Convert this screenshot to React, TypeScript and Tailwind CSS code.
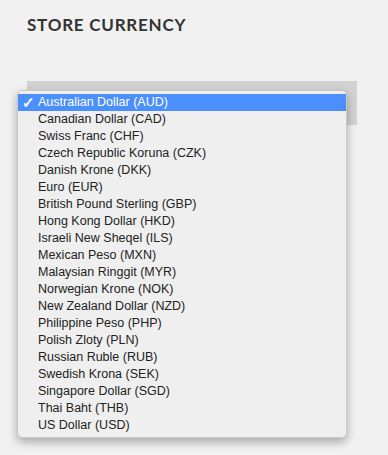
const currencies = [
  "Australian Dollar (AUD)",
  "Canadian Dollar (CAD)",
  "Swiss Franc (CHF)",
  "Czech Republic Koruna (CZK)",
  "Danish Krone (DKK)",
  "Euro (EUR)",
  "British Pound Sterling (GBP)",
  "Hong Kong Dollar (HKD)",
  "Israeli New Sheqel (ILS)",
  "Mexican Peso (MXN)",
  "Malaysian Ringgit (MYR)",
  "Norwegian Krone (NOK)",
  "New Zealand Dollar (NZD)",
  "Philippine Peso (PHP)",
  "Polish Zloty (PLN)",
  "Russian Ruble (RUB)",
  "Swedish Krona (SEK)",
  "Singapore Dollar (SGD)",
  "Thai Baht (THB)",
  "US Dollar (USD)",
];

export default function App() {
  const selected = 0;
  return (
    <div className="w-[388px] h-[455px] bg-[#f1f1f1] overflow-hidden font-['Liberation_Sans',Arial,sans-serif]">
      <div className="pl-[27px] pt-[15px]">
        <h2 className="font-['Lato','Open_Sans',sans-serif] font-bold text-[17px] leading-[20px] tracking-[0.045em] text-[#333]">
          STORE CURRENCY
        </h2>
      </div>

      <div className="relative mt-[46px] ml-[27px] w-[330px] h-[44px] bg-[#d2d2d2]">
        <div className="absolute left-[-10px] top-[9px] w-[330px] rounded-[5px] bg-[#efefef] border border-[#c8c8c8] shadow-[0_4px_10px_rgba(0,0,0,0.3)] py-[3px]">
          {currencies.map((c, i) => (
            <div
              key={c}
              className={
                i === selected
                  ? "flex items-center h-[17px] bg-[#4b8ffd] text-white text-[12.5px]"
                  : "flex items-center h-[17px] text-[#222] text-[12.5px]"
              }
            >
              <span className="w-[20px] pl-[4px] text-[15px] font-bold leading-none">
                {i === selected ? "✓" : ""}
              </span>
              <span className="leading-none">{c}</span>
            </div>
          ))}
        </div>
      </div>
    </div>
  );
}
